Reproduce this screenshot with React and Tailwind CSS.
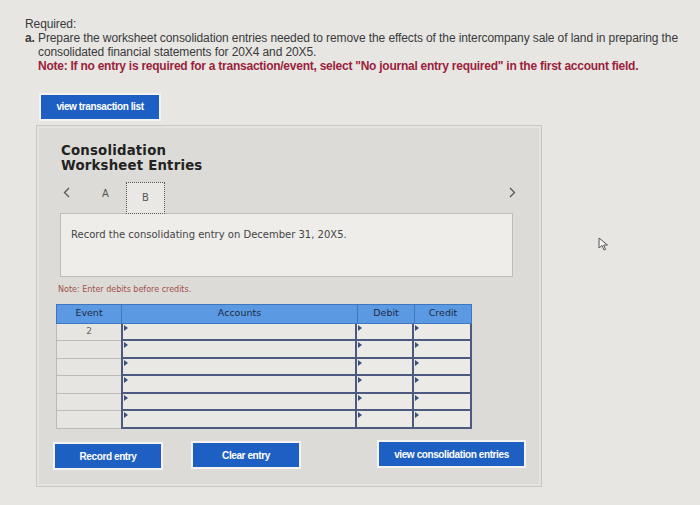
import React from 'react';

const rows = [0, 1, 2, 3, 4, 5];

const Tri = () => (
  <span className="absolute left-[1px] top-[1px] w-0 h-0 border-t-[3px] border-b-[3px] border-l-[4px] border-t-transparent border-b-transparent border-l-[#3a4f7a]" />
);

const BlueBtn = ({ children, className }) => (
  <button
    className={`bg-[#1d5fc2] text-white font-bold text-[10px] tracking-[-0.4px] shadow-[0_0_0_2px_#f4f3f1] ${className}`}
    style={{ fontFamily: 'Arial, "Liberation Sans", sans-serif' }}
  >
    {children}
  </button>
);

const Chevron = ({ dir }) => (
  <svg width="7" height="11" viewBox="0 0 7 11">
    <path
      d={dir === 'left' ? 'M6 1 L1.5 5.5 L6 10' : 'M1 1 L5.5 5.5 L1 10'}
      fill="none"
      stroke="#555"
      strokeWidth="1.3"
    />
  </svg>
);

const App = () => {
  return (
    <div
      className="relative w-[700px] h-[505px] overflow-hidden bg-[#e7e6e3] text-[#333]"
      style={{ fontFamily: '"Liberation Sans", Arial, sans-serif' }}
    >
      <div className="pt-[17px] pl-[25px] pr-[2px] text-[12px] leading-[14px] tracking-[-0.1px] text-[#3a3a3a]">
        <div>Required:</div>
        <div className="flex">
          <span className="w-[13px] shrink-0 font-bold">a.</span>
          <span>
            Prepare the worksheet consolidation entries needed to remove the effects of the intercompany sale of land in preparing the
            consolidated financial statements for 20X4 and 20X5.
          </span>
        </div>
        <div className="pl-[13px] font-bold tracking-[-0.25px] text-[#9b1f3c]">
          Note: If no entry is required for a transaction/event, select "No journal entry required" in the first account field.
        </div>
      </div>

      <div className="ml-[41px] mt-[20px]">
        <BlueBtn className="w-[118px] h-[24px]">view transaction list</BlueBtn>
      </div>

      <div
        className="ml-[36px] mt-[6px] w-[506px] h-[362px] bg-[#dcdbd8] border border-[#c9c8c5] shadow-[inset_0_0_0_2px_#e4e3e0]"
        style={{ fontFamily: '"DejaVu Sans", Verdana, sans-serif' }}
      >
        <div className="pl-[24px] pt-[17px] text-[13.3px] leading-[15px] font-bold text-[#222] tracking-[0.2px]">
          <div>Consolidation</div>
          <div>Worksheet Entries</div>
        </div>

        <div className="flex items-end h-[40px] pl-[26px] pr-[25px]">
          <span className="pb-[15px] w-[39px]">
            <Chevron dir="left" />
          </span>
          <span className="text-[#555] text-[10px] w-[24px] pb-[12px]">A</span>
          <div className="w-[39px] h-[32px] border border-dotted border-[#555] bg-[#e9e8e5] flex items-center justify-center text-[10px] text-[#555] -mb-[1px] z-10">
            B
          </div>
          <span className="ml-auto pb-[15px]">
            <Chevron dir="right" />
          </span>
        </div>

        <div className="ml-[23px] w-[453px] h-[64px] bg-[#eeedea] border border-[#bdbcb9] px-[10px] pt-[13px] text-[10px] text-[#444]">
          Record the consolidating entry on December 31, 20X5.
        </div>

        <div className="ml-[21px] mt-[7px] text-[8px] text-[#a3504a]">Note: Enter debits before credits.</div>

        <div className="ml-[19px] mt-[8px] w-[416px]">
          <div className="flex h-[20px] bg-[#5b9ae2] border border-[#3f76bd] text-[9.5px] text-[#1e2a44]">
            <div className="w-[65px] flex items-center justify-center border-r border-[#3f76bd]">Event</div>
            <div className="w-[236px] flex items-center justify-center border-r border-[#3f76bd]">Accounts</div>
            <div className="w-[57px] flex items-center justify-center border-r border-[#3f76bd]">Debit</div>
            <div className="flex-1 flex items-center justify-center">Credit</div>
          </div>
          {rows.map((r) => (
            <div key={r} className="flex h-[17.6px]">
              <div className="w-[65px] bg-[#e6e5e2] border-l border-b border-[#bcbbb8] flex items-center justify-center text-[9px] text-[#666]">
                {r === 0 ? '2' : ''}
              </div>
              <div className="relative w-[236px] bg-[#e9e8e5] border-2 border-t-0 border-[#4b5a7e]">
                <Tri />
              </div>
              <div className="relative w-[57px] bg-[#ebeae7] border-2 border-t-0 border-l-0 border-[#4b5a7e]">
                <Tri />
              </div>
              <div className="relative flex-1 bg-[#ebeae7] border-2 border-t-0 border-l-0 border-[#4b5a7e]">
                <Tri />
              </div>
            </div>
          ))}
        </div>

        <div className="flex items-start mt-[15px] ml-[18px]">
          <BlueBtn className="w-[106px] h-[24px]">Record entry</BlueBtn>
          <BlueBtn className="w-[106px] h-[24px] ml-[32px] -mt-[1px]">Clear entry</BlueBtn>
          <BlueBtn className="w-[145px] h-[24px] ml-[80px] -mt-[2px]">view consolidation entries</BlueBtn>
        </div>
      </div>

      <svg className="absolute left-[598px] top-[237px]" width="12" height="14" viewBox="0 0 12 14">
        <path d="M1 1 L1 11 L4 8.5 L6 13 L7.6 12.3 L5.7 8 L9.5 8 Z" fill="#f4f4f4" stroke="#555" strokeWidth="1" />
      </svg>
    </div>
  );
};

export default App;
